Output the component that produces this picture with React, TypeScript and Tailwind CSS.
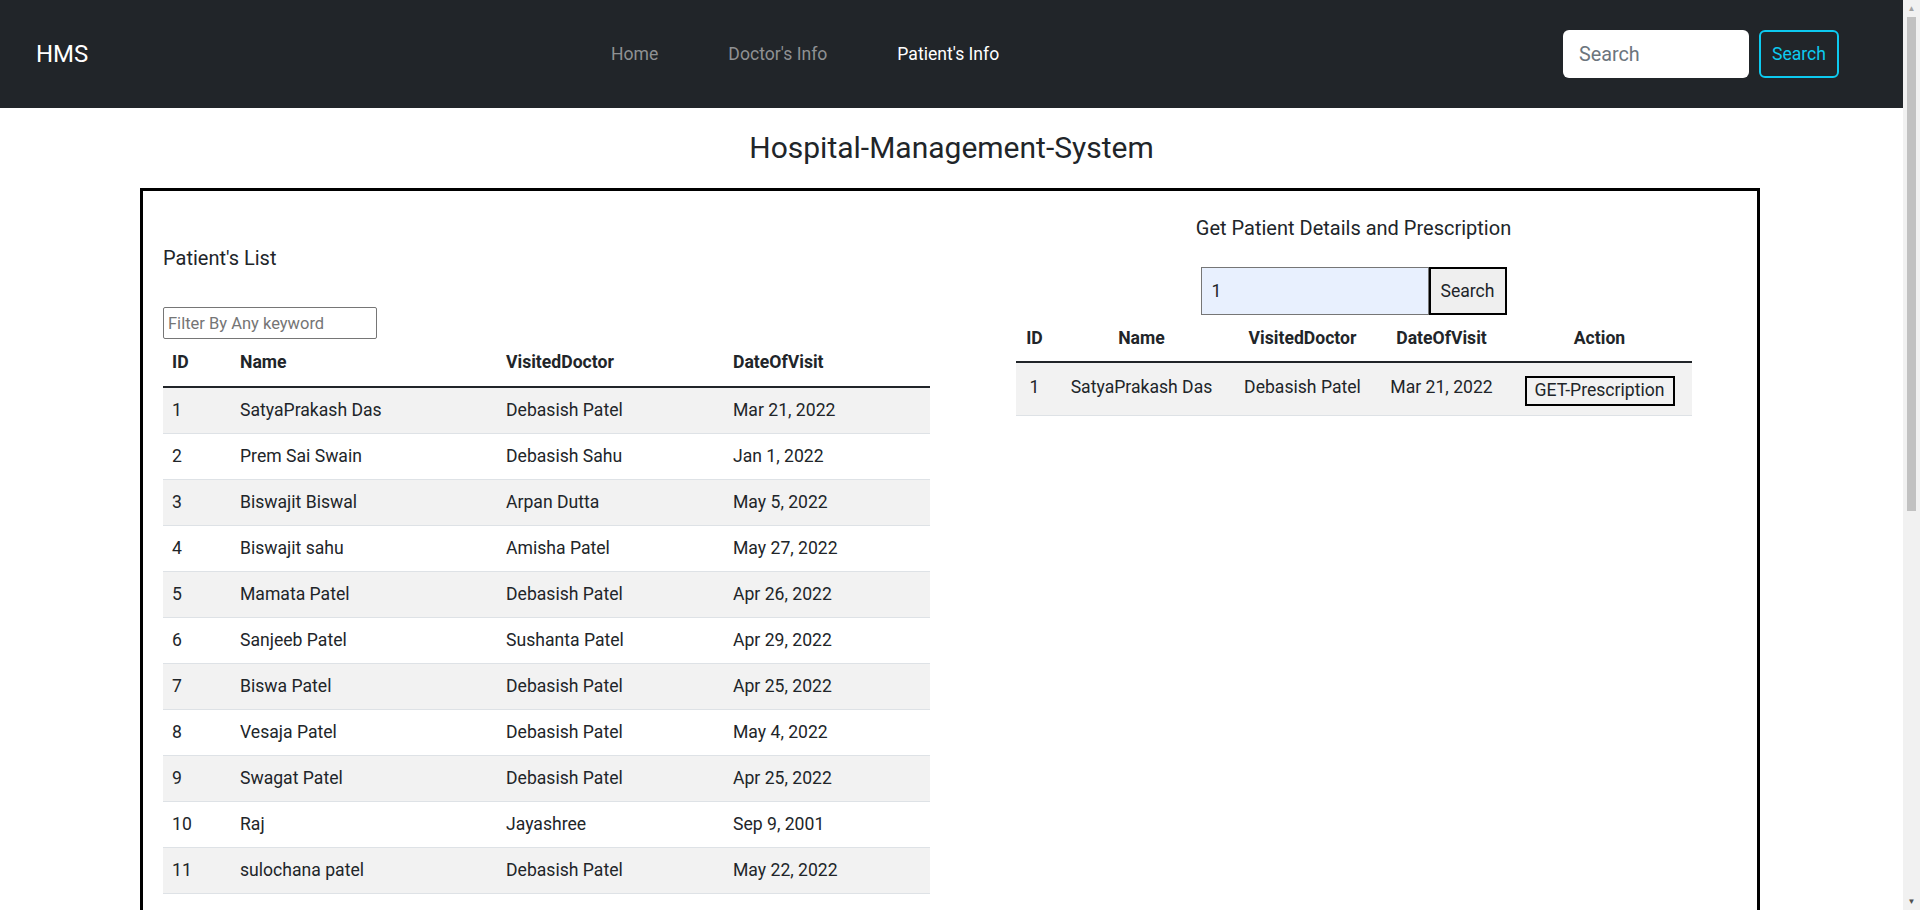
import { useState } from 'react';

interface Patient {
    id: number;
    name: string;
    doctor: string;
    date: string;
}

const patients: Patient[] = [
    { id: 1, name: 'SatyaPrakash Das', doctor: 'Debasish Patel', date: 'Mar 21, 2022' },
    { id: 2, name: 'Prem Sai Swain', doctor: 'Debasish Sahu', date: 'Jan 1, 2022' },
    { id: 3, name: 'Biswajit Biswal', doctor: 'Arpan Dutta', date: 'May 5, 2022' },
    { id: 4, name: 'Biswajit sahu', doctor: 'Amisha Patel', date: 'May 27, 2022' },
    { id: 5, name: 'Mamata Patel', doctor: 'Debasish Patel', date: 'Apr 26, 2022' },
    { id: 6, name: 'Sanjeeb Patel', doctor: 'Sushanta Patel', date: 'Apr 29, 2022' },
    { id: 7, name: 'Biswa Patel', doctor: 'Debasish Patel', date: 'Apr 25, 2022' },
    { id: 8, name: 'Vesaja Patel', doctor: 'Debasish Patel', date: 'May 4, 2022' },
    { id: 9, name: 'Swagat Patel', doctor: 'Debasish Patel', date: 'Apr 25, 2022' },
    { id: 10, name: 'Raj', doctor: 'Jayashree', date: 'Sep 9, 2001' },
    { id: 11, name: 'sulochana patel', doctor: 'Debasish Patel', date: 'May 22, 2022' },
];

function Navbar() {
    return (
        <nav className="h-[108px] bg-[#212529] flex items-center pl-[36px] pr-[64px]">
            <span className="text-white text-[24px] leading-none w-[540px]">HMS</span>
            <div className="flex items-center text-[17.6px]">
                <a className="px-[35px] text-[#8f9193]">Home</a>
                <a className="px-[35px] text-[#8f9193]">Doctor's Info</a>
                <a className="px-[35px] text-white">Patient's Info</a>
            </div>
            <div className="ml-auto flex items-center gap-[10px]">
                <input
                    placeholder="Search"
                    className="w-[186px] h-[48px] bg-white rounded-[6px] px-[16px] text-[19.8px] text-[#212529] placeholder:text-[#6c757d] outline-none"
                />
                <button className="h-[48px] px-[11px] border-2 border-[#0dcaf0] text-[#0dcaf0] rounded-[6px] text-[17.6px]">
                    Search
                </button>
            </div>
        </nav>
    );
}

function PatientList() {
    const [filter, setFilter] = useState('');
    const rows = patients.filter((p) =>
        `${p.id} ${p.name} ${p.doctor} ${p.date}`.toLowerCase().includes(filter.toLowerCase())
    );

    return (
        <div className="px-[20px] pt-[55px]">
            <h5 className="text-[20px] leading-[24px]">Patient's List</h5>
            <input
                value={filter}
                onChange={(e) => setFilter(e.target.value)}
                placeholder="Filter By Any keyword"
                className="mt-[37px] w-[214px] h-[32px] border border-[#767676] rounded-[2px] px-[4px] text-[16.5px] placeholder:text-[#757575] outline-none"
            />
            <table className="w-[767px] table-fixed border-separate border-spacing-0 text-[17.6px]">
                <thead>
                    <tr className="text-left">
                        <th className="w-[68px] h-[49px] pl-[9px] font-bold border-b-2 border-[#212529]">ID</th>
                        <th className="w-[266px] pl-[9px] font-bold border-b-2 border-[#212529]">Name</th>
                        <th className="w-[227px] pl-[9px] font-bold border-b-2 border-[#212529]">VisitedDoctor</th>
                        <th className="w-[206px] pl-[9px] font-bold border-b-2 border-[#212529]">DateOfVisit</th>
                    </tr>
                </thead>
                <tbody>
                    {rows.map((p, i) => (
                        <tr key={p.id} className={i % 2 === 0 ? 'bg-[#f2f2f2]' : 'bg-white'}>
                            <td className="h-[46px] pl-[9px] border-b border-[#dee2e6]">{p.id}</td>
                            <td className="pl-[9px] border-b border-[#dee2e6]">{p.name}</td>
                            <td className="pl-[9px] border-b border-[#dee2e6]">{p.doctor}</td>
                            <td className="pl-[9px] border-b border-[#dee2e6]">{p.date}</td>
                        </tr>
                    ))}
                </tbody>
            </table>
        </div>
    );
}

function PatientDetails() {
    const [query, setQuery] = useState('1');
    const p = patients[0];

    return (
        <div className="pt-[25px] flex flex-col items-center">
            <h5 className="text-[20px] leading-[24px]">Get Patient Details and Prescription</h5>
            <div className="mt-[27px] flex">
                <input
                    value={query}
                    onChange={(e) => setQuery(e.target.value)}
                    className="w-[228px] h-[48px] bg-[#e8f0fe] border border-[#767676] px-[10px] text-[17.6px] outline-none"
                />
                <button className="w-[78px] h-[48px] bg-[#efefef] border-2 border-black text-[17.6px]">
                    Search
                </button>
            </div>
            <table className="w-[676px] table-fixed border-separate border-spacing-0 text-[17.6px] text-center">
                <thead>
                    <tr>
                        <th className="w-[38px] h-[48px] font-bold border-b-2 border-[#212529]">ID</th>
                        <th className="w-[176px] font-bold border-b-2 border-[#212529]">Name</th>
                        <th className="w-[146px] font-bold border-b-2 border-[#212529]">VisitedDoctor</th>
                        <th className="w-[132px] font-bold border-b-2 border-[#212529]">DateOfVisit</th>
                        <th className="w-[184px] font-bold border-b-2 border-[#212529]">Action</th>
                    </tr>
                </thead>
                <tbody>
                    <tr className="bg-[#f2f2f2]">
                        <td className="h-[53px] border-b border-[#dee2e6] pb-[3px]">{p.id}</td>
                        <td className="border-b border-[#dee2e6] pb-[3px]">{p.name}</td>
                        <td className="border-b border-[#dee2e6] pb-[3px]">{p.doctor}</td>
                        <td className="border-b border-[#dee2e6] pb-[3px]">{p.date}</td>
                        <td className="border-b border-[#dee2e6] pt-[3px]">
                            <button className="w-[150px] h-[30px] border-2 border-black text-[17.6px] leading-none">
                                GET-Prescription
                            </button>
                        </td>
                    </tr>
                </tbody>
            </table>
        </div>
    );
}

function ScrollTrack() {
    return (
        <div className="sticky top-0 h-screen w-[17px] shrink-0 bg-[#f1f1f1] flex flex-col items-center">
            <div className="h-[17px] flex items-center justify-center text-[8px] text-[#a3a3a3]">▲</div>
            <div className="w-[9px] h-[494px] bg-[#c1c1c1]" />
            <div className="mt-auto h-[17px] flex items-center justify-center text-[8px] text-[#505050]">▼</div>
        </div>
    );
}

export default function App() {
    return (
        <div className="flex items-start bg-white text-[#212529] font-['Roboto',sans-serif]">
            <div className="w-[1903px] shrink-0">
                <Navbar />
                <h3 className="pt-[22px] text-center text-[30px] leading-[36px]">Hospital-Management-System</h3>
                <div className="ml-[140px] mt-[22px] mb-[30px] w-[1620px] min-h-[1390px] border-[3px] border-black grid grid-cols-2">
                    <PatientList />
                    <PatientDetails />
                </div>
            </div>
            <ScrollTrack />
        </div>
    );
}
